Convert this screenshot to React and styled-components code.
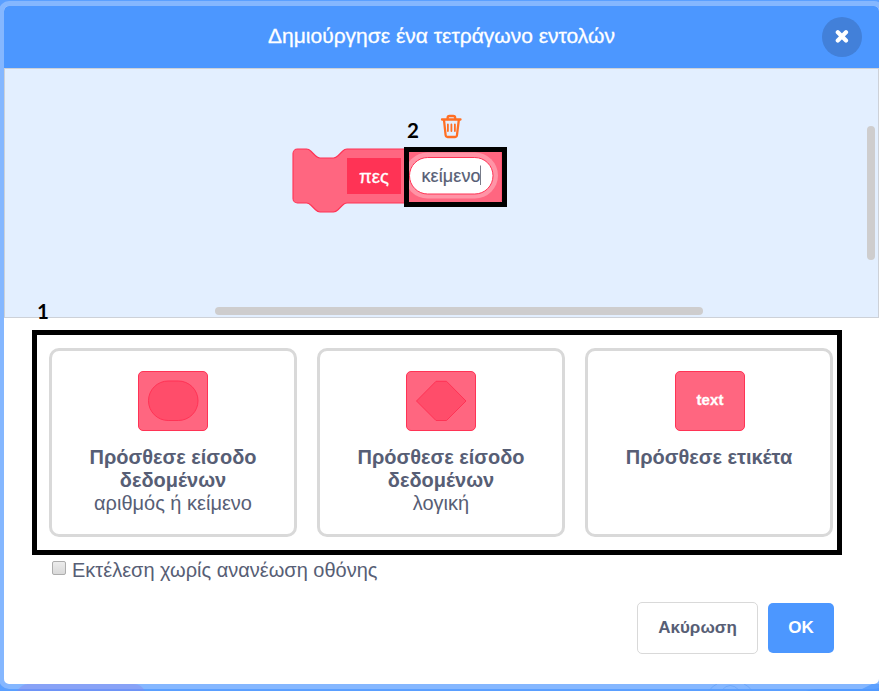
import React from "react";
import styled, { createGlobalStyle } from "styled-components";

const Global = createGlobalStyle`
  * { box-sizing: border-box; }
  body {
    margin: 0;
    overflow: hidden;
    background: #5a9fff;
    font-family: "Liberation Sans", Arial, sans-serif;
    color: #575e75;
  }
`;

const Screen = styled.div`
  position: relative;
  width: 879px;
  height: 691px;
  overflow: hidden;
  padding-top: 1px;
  background: #5a9fff;
`;

const Backdrop = styled.svg`
  position: absolute;
  left: 0;
  bottom: 0;
  pointer-events: none;
`;

const Modal = styled.main`
  display: flex;
  flex-direction: column;
  width: 885px;
  height: 688px;
  margin-left: -1px;
  border: 5px solid #85b7ff;
  border-radius: 10px;
  overflow: hidden;
  background: #fff;
`;

const Header = styled.header`
  display: grid;
  grid-template-columns: 1fr auto 1fr;
  align-items: center;
  height: 62px;
  flex: none;
  padding-right: 18px;
  background: #4c97ff;
  color: #fff;
`;

const Title = styled.h1`
  grid-column: 2;
  margin: 0;
  padding: 0 0 2px 18px;
  font-size: 21px;
  font-weight: 400;
  -webkit-text-stroke: 0.3px #fff;
  white-space: nowrap;
`;

const CloseButton = styled.button`
  justify-self: end;
  display: grid;
  place-items: center;
  width: 40px;
  height: 40px;
  margin-right: -1px;
  padding: 0;
  border: 0;
  border-radius: 50%;
  background: #4280d9;
`;

const Workspace = styled.section`
  position: relative;
  flex: none;
  height: 250px;
  border: 1px solid #cdd1d8;
  background: #e3efff;
`;

const BlockDrawing = styled.svg`
  display: block;
  margin: 35px 0 0 275px;
`;

const Scrollbar = styled.div`
  position: absolute;
  border-radius: 4px;
  background: #cecdce;
  ${(p) =>
    p.$vertical
      ? "right: 3px; top: 57px; width: 8px; height: 134px;"
      : "left: 210px; bottom: 2px; width: 488px; height: 8px;"}
`;

const Body = styled.section`
  display: flex;
  flex-direction: column;
  width: 829px;
  padding: 30px 0 0 45px;
`;

const Options = styled.div`
  display: grid;
  grid-template-columns: repeat(3, 248px);
  gap: 20px;
`;

const OptionCard = styled.button`
  display: flex;
  flex-direction: column;
  align-items: center;
  height: 189px;
  padding: 20px 0 0;
  border: 3px solid #d9d9d9;
  border-radius: 10px;
  background: #fff;
  color: #575e75;
  font: 20px/23px "Liberation Sans", Arial, sans-serif;
`;

const OptionIcon = styled.svg`
  display: block;
  margin: 0 0 15px ${(p) => p.$nudge || 0}px;
`;

const OptionTitle = styled.strong`
  width: 200px;
`;

const RefreshLabel = styled.label`
  display: flex;
  align-items: center;
  height: 24px;
  margin: 21px 0 0 3px;
  font-size: 20px;
  white-space: nowrap;
`;

const Checkbox = styled.span`
  width: 14px;
  height: 14px;
  margin: 0 6px 4px 0;
  border: 1px solid #adadad;
  border-radius: 2px;
  background: linear-gradient(#ececec, #d9d9d9);
`;

const Actions = styled.footer`
  display: flex;
  justify-content: flex-end;
  align-items: center;
  gap: 10px;
  height: 52px;
  margin: 20px -1px 0 0;
`;

const ActionButton = styled.button`
  width: ${(p) => (p.$primary ? 66 : 121)}px;
  height: ${(p) => (p.$primary ? 50 : 52)}px;
  padding: 0;
  border: ${(p) => (p.$primary ? "0" : "1px solid #d9d9d9")};
  border-radius: 5px;
  background: ${(p) => (p.$primary ? "#4c97ff" : "#fff")};
  color: ${(p) => (p.$primary ? "#fff" : "#575e75")};
  font: bold 17px "Liberation Sans", Arial, sans-serif;
`;

const Highlight = styled.div`
  position: absolute;
  left: ${(p) => p.$x}px;
  top: ${(p) => p.$y}px;
  width: ${(p) => p.$w}px;
  height: ${(p) => p.$h}px;
  border: 5px solid #000;
  pointer-events: none;
`;

const StepNumber = styled.span`
  position: absolute;
  left: ${(p) => p.$x}px;
  top: ${(p) => p.$y}px;
  color: #000;
  font: bold 20.5px/24px Lato, sans-serif;
`;

const BLOCK_PATH =
  "M0 4A4 4 0 0 1 4 0H12c2 0 3 1 4 2l4 4c1 1 2 2 4 2h12c2 0 3-1 4-2l4-4c1-1 2-2 4-2H182a4 4 0 0 1 4 4V44a4 4 0 0 1-4 4H48c-2 0-3 1-4 2l-4 4c-1 1-2 2-4 2H24c-2 0-3-1-4-2l-4-4c-1-1-2-2-4-2H4a4 4 0 0 1-4-4z";

function CustomBlock() {
  return (
    <BlockDrawing width="240" height="125" viewBox="280 104 240 125">
      <g fill="none" stroke="#ff6f24" strokeWidth="2.3" strokeLinejoin="round" strokeLinecap="round">
        <path d="M442 119.5H460.5M444 120L445.6 135Q445.8 137 447.6 137H455.2Q456.8 137 457 135L458.8 120" />
        <path d="M447.6 119V118Q447.6 116 449.6 116H453.2Q455.2 116 455.2 118V119" />
        <path d="M447.9 124.5V131M451.4 124.5V131M454.9 124.5V131" strokeWidth="1.8" />
      </g>
      <path d={BLOCK_PATH} transform="translate(293 149) scale(1.125)" fill="#ff6680" stroke="#ff3355" strokeWidth="1" />
      <rect x="347" y="158" width="54" height="36" fill="#ff3355" />
      <text x="359" y="183" fill="#fff" stroke="#fff" strokeWidth=".3" fontFamily="Liberation Sans" fontSize="18.5" textLength="30">πες</text>
      <rect x="404.5" y="152.5" width="93.5" height="46" rx="23" fill="#ff94a6" />
      <rect x="409.5" y="157.5" width="83.5" height="36.5" rx="18.2" fill="#fff" stroke="#ff3355" />
      <text x="421.5" y="181.5" fill="#575e75" stroke="#575e75" strokeWidth=".2" fontFamily="Liberation Sans" fontSize="18" textLength="59">κείμενο</text>
      <path d="M480.5 165.5V185" stroke="#777b88" strokeWidth="1" />
    </BlockDrawing>
  );
}

function InputIcon({ kind }) {
  return (
    <OptionIcon $nudge={kind === "label" ? 2 : 0} width="70" height="60" viewBox="0 0 70 60">
      <rect x=".5" y=".5" width="69" height="59" rx="4.5" fill="#ff6680" stroke="#ff3355" />
      {kind === "round" && (
        <rect x="10.5" y="10" width="49.5" height="39.5" rx="19.7" fill="#ff4d6a" stroke="#ff3355" />
      )}
      {kind === "boolean" && (
        <path d="M10.5 30L30 10.3H40.5L60 30L40.5 49.5H30Z" fill="#ff4d6a" stroke="#ff3355" />
      )}
      {kind === "label" && (
        <text x="35" y="34" textAnchor="middle" fill="#fff" stroke="#fff" strokeWidth=".3" fontFamily="Liberation Sans" fontWeight="700" fontSize="15" textLength="27">text</text>
      )}
    </OptionIcon>
  );
}

const OPTIONS = [
  { kind: "round", title: "Πρόσθεσε είσοδο δεδομένων", note: "αριθμός ή κείμενο" },
  { kind: "boolean", title: "Πρόσθεσε είσοδο δεδομένων", note: "λογική" },
  { kind: "label", title: "Πρόσθεσε ετικέτα" },
];

export default function App() {
  return (
    <Screen>
      <Global />
      <Modal>
        <Header>
          <Title>Δημιούργησε ένα τετράγωνο εντολών</Title>
          <CloseButton aria-label="Κλείσιμο">
            <svg width="14" height="14" viewBox="0 0 14 14">
              <path d="M2.8 2.3L11 10.5M11 2.3L2.8 10.5" stroke="#fff" strokeWidth="4.2" strokeLinecap="round" />
            </svg>
          </CloseButton>
        </Header>
        <Workspace>
          <CustomBlock />
          <Scrollbar $vertical />
          <Scrollbar />
        </Workspace>
        <Body>
          <Options>
            {OPTIONS.map((o) => (
              <OptionCard key={o.kind}>
                <InputIcon kind={o.kind} />
                <OptionTitle>{o.title}</OptionTitle>
                {o.note && <span>{o.note}</span>}
              </OptionCard>
            ))}
          </Options>
          <RefreshLabel>
            <Checkbox />
            Εκτέλεση χωρίς ανανέωση οθόνης
          </RefreshLabel>
          <Actions>
            <ActionButton>Ακύρωση</ActionButton>
            <ActionButton $primary>OK</ActionButton>
          </Actions>
        </Body>
      </Modal>
      <Backdrop width="879" height="7" viewBox="0 684 879 7">
        <path d="M17 691Q22 684 28 684H134Q141 684 145 691Z" fill="#8b83e8" opacity=".4" />
        <path d="M709 691Q712 686 717 684M752 691Q749 686 744 684M722 690Q730 681 739 690" fill="none" stroke="#5d9df5" opacity=".55" />
        <path d="M806 691Q810 689 818 689H862L872 684Q878 683 879 678V691Z" fill="#4c97ff" opacity=".7" />
      </Backdrop>
      <StepNumber $x={407} $y={118}>2</StepNumber>
      <StepNumber $x={37} $y={299}>1</StepNumber>
      <Highlight $x={404} $y={147} $w={103} $h={60} />
      <Highlight $x={32} $y={330} $w={810} $h={225} />
    </Screen>
  );
}
